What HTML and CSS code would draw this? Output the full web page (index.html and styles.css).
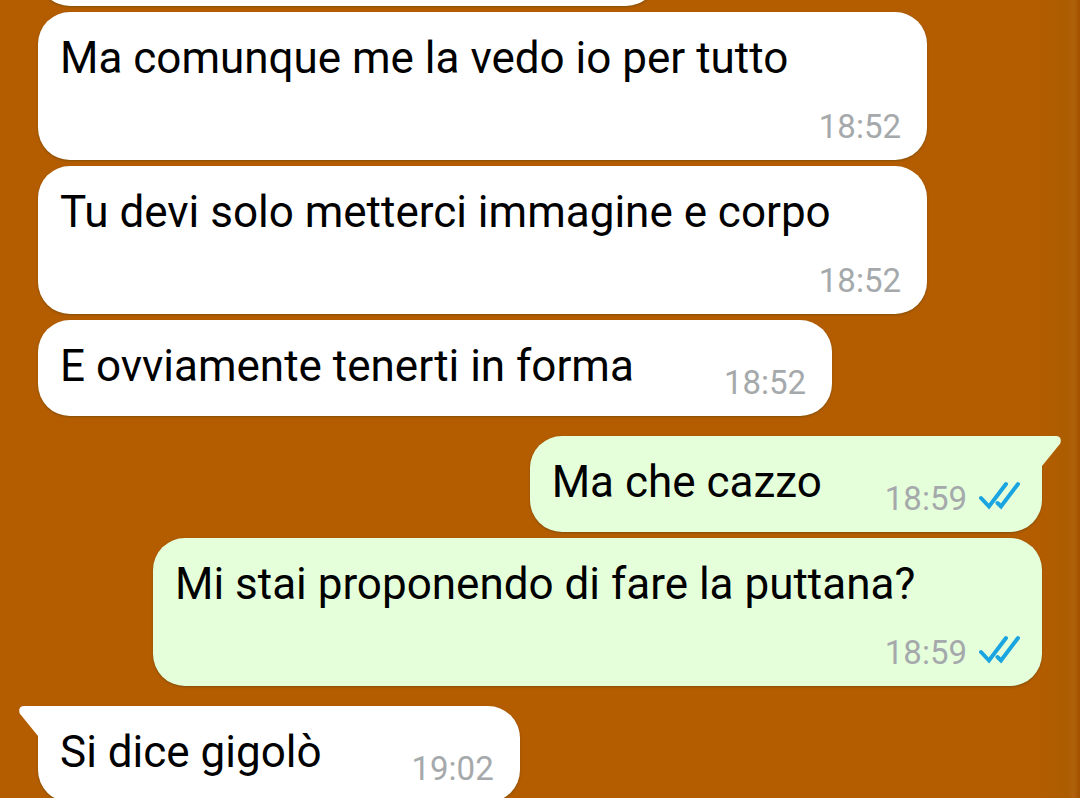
FILE: index.html
```html
<!DOCTYPE html>
<html lang="it">

<head>
    <meta charset="UTF-8">
    <meta name="viewport" content="width=device-width, initial-scale=1.0">
    <title>Chat</title>
    <link rel="stylesheet" href="styles.css">
</head>

<body>
    <main class="chat">
        <div class="messages">
            <div class="bubble in previous"></div>

            <div class="bubble in wide">
                <p class="text">Ma comunque me la vedo io per tutto</p>
                <div class="meta"><time>18:52</time></div>
            </div>

            <div class="bubble in wide">
                <p class="text">Tu devi solo metterci immagine e corpo</p>
                <div class="meta"><time>18:52</time></div>
            </div>

            <div class="bubble in">
                <p class="text">E ovviamente tenerti in forma</p>
                <div class="meta"><time>18:52</time></div>
            </div>

            <div class="bubble out first">
                <svg class="tail" viewBox="0 0 21 31" aria-hidden="true">
                    <path d="M0 0H15C20 0 21 5 18.500 8.500L1 30H0Z" />
                </svg>
                <p class="text">Ma che cazzo</p>
                <div class="meta">
                    <time>18:59</time>
                    <svg class="ticks" viewBox="0 0 41 36" aria-hidden="true">
                        <path d="M2 17L10 25.500L27 3M18.500 22L22 25.500L39 3" />
                    </svg>
                </div>
            </div>

            <div class="bubble out wide">
                <p class="text">Mi stai proponendo di fare la puttana?</p>
                <div class="meta">
                    <time>18:59</time>
                    <svg class="ticks" viewBox="0 0 41 36" aria-hidden="true">
                        <path d="M2 17L10 25.500L27 3M18.500 22L22 25.500L39 3" />
                    </svg>
                </div>
            </div>

            <div class="bubble in first">
                <svg class="tail" viewBox="0 0 21 31" aria-hidden="true">
                    <path d="M21 0H6C1 0 0 5 2.500 8.500L20 30H21Z" />
                </svg>
                <p class="text">Si dice gigolò</p>
                <div class="meta"><time>19:02</time></div>
            </div>
        </div>
    </main>
</body>

</html>
```
FILE: styles.css
```css
* {
    box-sizing: border-box;
}

body {
    margin: 0;
    font-family: Roboto, sans-serif;
    color: #000;
    background: #b35c00;
}

.chat {
    height: 100vh;
    overflow: hidden;
    background: linear-gradient(to right, #b35c00, #ac5d00 24px, #ac5d02 28px, #b0620c 34px, #a65500 38px, #a25000) right / 40px 100% no-repeat;
}

/* scrolled so that the previous message is almost out of view */
.messages {
    display: flex;
    flex-direction: column;
    gap: 6px;
    margin-top: -90px;
    padding: 0 38px;
}

.bubble {
    position: relative;
    display: flex;
    flex-shrink: 0;
    min-height: 96px;
    max-width: calc(100% - 115px);
    padding: 20px 22px 13px;
    border-radius: 32px;
    box-shadow: 0 1px 2px rgba(60, 60, 20, 0.4);
}

.in {
    align-self: flex-start;
    gap: 90px;
    padding-right: 26px;
    background: #fff;
}

.out {
    align-self: flex-end;
    gap: 63px;
    background: #e5ffdb;
}

.previous {
    width: 620px;
}

.wide {
    flex-direction: column;
    gap: 23px;
    width: 100%;
}

.first {
    margin-top: 14px;
}

.in.first {
    border-top-left-radius: 0;
}

.out.first {
    border-top-right-radius: 0;
}

.text {
    margin: 0;
    font-size: 44px;
    line-height: 52px;
}

.meta {
    display: flex;
    align-items: center;
    align-self: flex-end;
    gap: 12px;
    font-size: 33px;
    line-height: 40px;
    color: #a5a9ab;
}

.ticks {
    width: 41px;
    height: 36px;
    fill: none;
    stroke: #1ba5e0;
    stroke-width: 4;
    stroke-linecap: round;
    stroke-linejoin: miter;
}

.tail {
    position: absolute;
    top: 0;
    width: 21px;
    height: 31px;
}

.in .tail {
    left: -20px;
    fill: #fff;
}

.out .tail {
    right: -20px;
    fill: #e5ffdb;
}
```
